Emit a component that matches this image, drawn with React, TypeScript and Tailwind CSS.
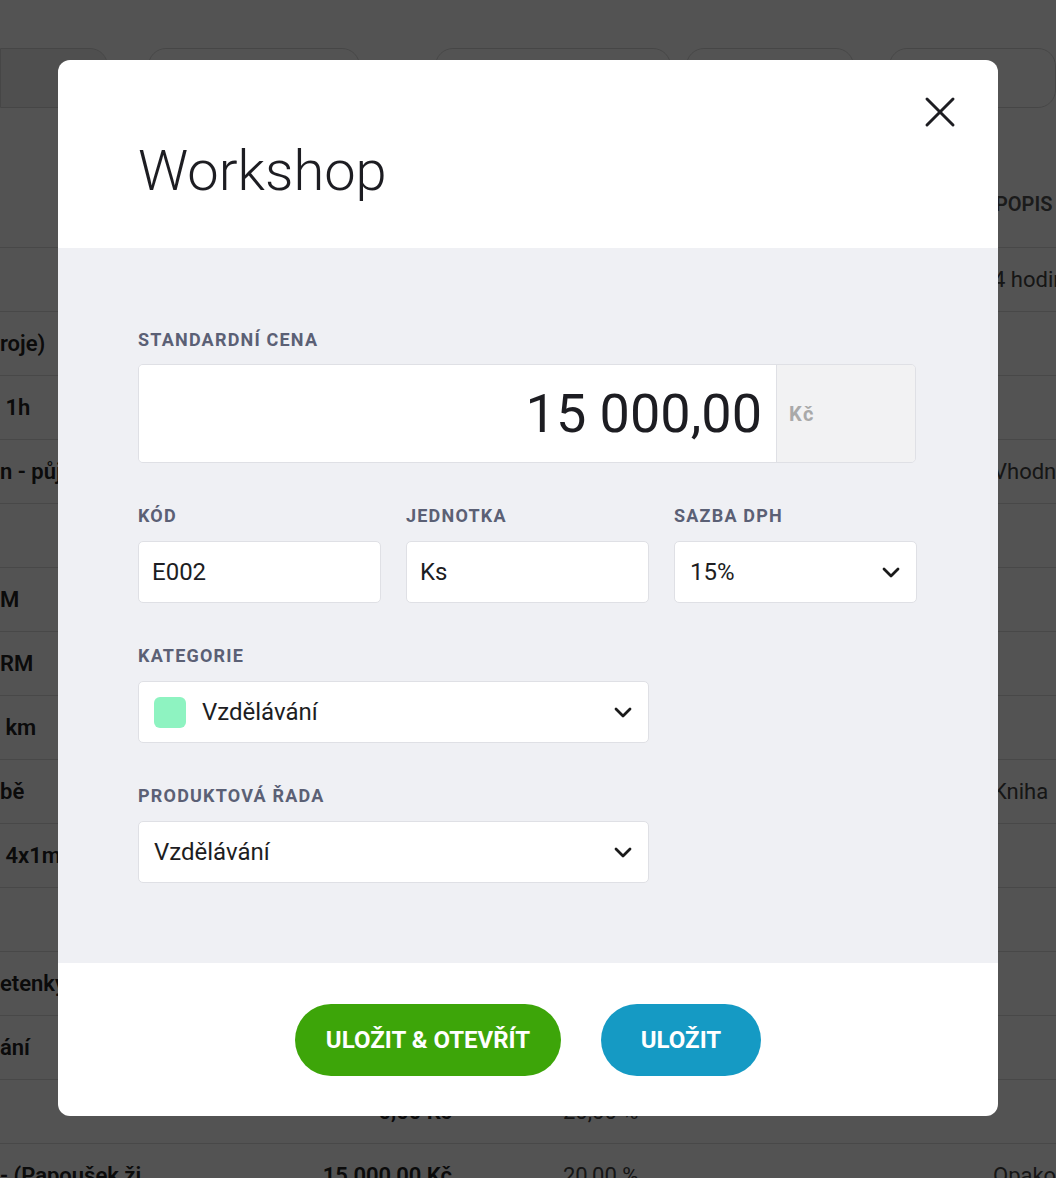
import { useState } from 'react';

const rows = [
  { name: '', price: '', vat: '', note: '4 hodiny' },
  { name: 'roje)', price: '', vat: '', note: '' },
  { name: ' 1h', price: '', vat: '', note: '' },
  { name: 'n - půjčení', price: '', vat: '', note: 'Vhodné' },
  { name: '', price: '', vat: '', note: '' },
  { name: 'M', price: '', vat: '', note: '' },
  { name: 'RM', price: '', vat: '', note: '' },
  { name: ' km', price: '', vat: '', note: '' },
  { name: 'bě', price: '', vat: '', note: 'Kniha' },
  { name: ' 4x1m', price: '', vat: '', note: '' },
  { name: '', price: '', vat: '', note: '' },
  { name: 'etenky', price: '', vat: '', note: '' },
  { name: 'ání', price: '', vat: '', note: '' },
  { name: '', price: '0,00 Kč', vat: '20,00 %', note: '' },
  { name: '- (Papoušek ži', price: '15 000,00 Kč', vat: '20,00 %', note: 'Opakovaně' },
];

function Chevron() {
  return (
    <svg width="18" height="11" viewBox="0 0 18 11" fill="none">
      <polyline points="2,2 9,9 16,2" stroke="#1a1a1a" strokeWidth="2.8" strokeLinecap="round" strokeLinejoin="round" />
    </svg>
  );
}

function Label({ children, tight }: { children: React.ReactNode; tight?: boolean }) {
  return (
    <div
      className={
        tight
          ? 'h-6 mb-[12px] text-[18px] leading-6 font-bold uppercase tracking-[1.2px] text-[#5b6075]'
          : 'h-6 mb-[13px] text-[18px] leading-6 font-bold uppercase tracking-[1.2px] text-[#5b6075]'
      }
    >
      {children}
    </div>
  );
}

function Background() {
  return (
    <div className="min-h-[1178px] bg-white text-[#222]">
      {/* Tabs */}
      <div className="flex items-start pt-[48px] h-[160px]">
        <div className="w-[110px] h-[60px] rounded-r-[18px] border border-[#d8d8d8] bg-[#f3f3f3]" />
        <div className="w-[215px] h-[60px] ml-[40px] rounded-[18px] border border-[#d8d8d8]" />
        <div className="w-[240px] h-[60px] ml-[75px] rounded-[18px] border border-[#d8d8d8]" />
        <div className="w-[170px] h-[60px] ml-[15px] rounded-[18px] border border-[#d8d8d8]" />
        <div className="w-[170px] h-[60px] ml-[35px] rounded-[18px] border border-[#d8d8d8]" />
      </div>
      {/* Table header */}
      <div className="flex h-[88px] items-center border-b border-[#dedede]">
        <div className="flex-1" />
        <div className="w-[61px] overflow-hidden whitespace-nowrap text-[20px] font-semibold text-[#555]">POPIS</div>
      </div>
      {rows.map((r, i) => (
        <div key={i} className="flex h-[64px] items-center border-b border-[#dedede] whitespace-pre">
          <div className="w-[300px] text-[22px] font-semibold">{r.name}</div>
          <div className="w-[152px] text-right text-[22px] font-semibold">{r.price}</div>
          <div className="w-[111px]" />
          <div className="w-[430px] text-[22px] text-[#444]">{r.vat}</div>
          <div className="flex-1 overflow-hidden text-[22px] text-[#444]">{r.note}</div>
        </div>
      ))}
    </div>
  );
}

export default function App() {
  const [price] = useState('15 000,00');

  return (
    <div className="relative min-h-[1178px] overflow-hidden font-['Roboto',sans-serif]">
      <Background />

      <div className="fixed inset-0 bg-black/[0.675] flex justify-center items-start pt-[60px]">
        <div className="w-[940px] rounded-[12px] overflow-hidden bg-white">
          {/* Header */}
          <div className="relative h-[188px] px-[80px] pt-[79px]">
            <h2 className="text-[56px] leading-[64px] font-light text-[#1d1d22]">Workshop</h2>
            <button className="absolute top-[34px] right-[40px] p-[2px]">
              <svg width="32" height="32" viewBox="0 0 32 32" fill="none">
                <line x1="3" y1="3" x2="29" y2="29" stroke="#1d1d22" strokeWidth="3" strokeLinecap="round" />
                <line x1="29" y1="3" x2="3" y2="29" stroke="#1d1d22" strokeWidth="3" strokeLinecap="round" />
              </svg>
            </button>
          </div>

          {/* Body */}
          <div className="bg-[#eff0f4] px-[80px] pt-[80px] pb-[80px] flex flex-col gap-[41px]">
            <div>
              <Label tight>Standardní cena</Label>
              <div className="flex h-[99px] w-[778px] rounded-[5px] border border-[#dfe0e5] overflow-hidden">
                <div className="flex-1 bg-white flex items-center justify-end pr-[14px] text-[54px] text-[#1d1d22]">
                  {price}
                </div>
                <div className="w-[139px] bg-[#f2f2f3] border-l border-[#dfe0e5] flex items-center pl-[12px] text-[20px] font-bold tracking-[1.6px] text-[#a9a9a9]">
                  Kč
                </div>
              </div>
            </div>

            <div className="grid grid-cols-3 gap-[25px] w-[779px]">
              <div>
                <Label>Kód</Label>
                <div className="h-[62px] bg-white border border-[#dfe0e5] rounded-[5px] flex items-center px-[13px] text-[24px] text-[#1d1d22]">
                  E002
                </div>
              </div>
              <div>
                <Label>Jednotka</Label>
                <div className="h-[62px] bg-white border border-[#dfe0e5] rounded-[5px] flex items-center px-[13px] text-[24px] text-[#1d1d22]">
                  Ks
                </div>
              </div>
              <div>
                <Label>Sazba DPH</Label>
                <div className="h-[62px] bg-white border border-[#dfe0e5] rounded-[5px] flex items-center justify-between pl-[15px] pr-[16px] text-[24px] text-[#1d1d22]">
                  <span>15%</span>
                  <Chevron />
                </div>
              </div>
            </div>

            <div className="w-[511px]">
              <Label>Kategorie</Label>
              <div className="h-[62px] bg-white border border-[#dfe0e5] rounded-[5px] flex items-center pl-[15px] pr-[16px] text-[24px] text-[#1d1d22]">
                <span className="w-[32px] h-[31px] rounded-[6px] bg-[#8ef3c1]" />
                <span className="ml-[16px] flex-1">Vzdělávání</span>
                <Chevron />
              </div>
            </div>

            <div className="w-[511px]">
              <Label>Produktová řada</Label>
              <div className="h-[62px] bg-white border border-[#dfe0e5] rounded-[5px] flex items-center pl-[15px] pr-[16px] text-[24px] text-[#1d1d22]">
                <span className="flex-1">Vzdělávání</span>
                <Chevron />
              </div>
            </div>
          </div>

          {/* Footer */}
          <div className="h-[153px] flex items-center justify-center gap-[40px]">
            <button className="w-[266px] h-[72px] rounded-full bg-[#3da509] text-white text-[24px] font-bold uppercase">
              Uložit &amp; otevřít
            </button>
            <button className="w-[160px] h-[72px] rounded-full bg-[#159ac4] text-white text-[24px] font-bold uppercase">
              Uložit
            </button>
          </div>
        </div>
      </div>
    </div>
  );
}
